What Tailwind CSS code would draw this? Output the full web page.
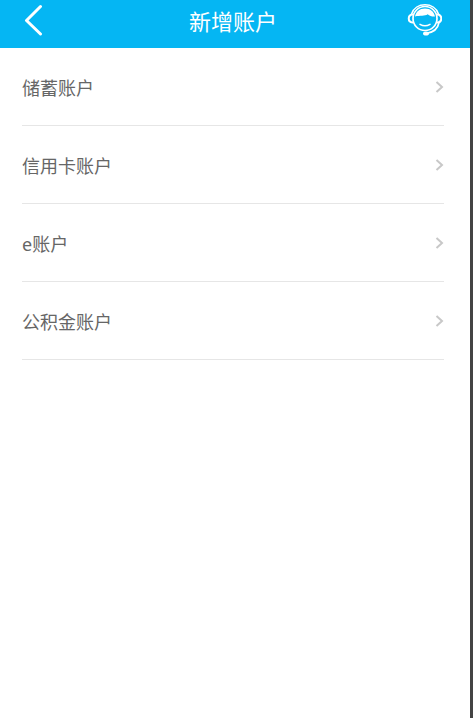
<!DOCTYPE html>
<html lang="zh-CN">
<head>
  <meta charset="UTF-8" />
  <meta name="viewport" content="width=device-width, initial-scale=1.0"/>
  <title>新增账户</title>
  <script src="https://cdn.jsdelivr.net/npm/@tailwindcss/browser@4"></script>
</head>
<body class="min-h-screen bg-white border-r-3 border-[#444444] font-['Noto_Sans','Noto_Sans_CJK_SC',sans-serif]">
  <header class="grid grid-cols-[1fr_auto_1fr] items-center h-12 pl-6 pr-7 bg-[#05b6f3] text-white">
    <button type="button" aria-label="返回" class="justify-self-start">
      <svg class="block w-5 h-8 mb-2" viewBox="0 0 20 32" fill="none" stroke="currentColor" stroke-width="3" stroke-linecap="round" stroke-linejoin="round">
        <path d="M16.5 2.5 2.5 16.5l14 13.5"/>
      </svg>
    </button>
    <h1 class="pb-1.5 text-[22px] leading-8 font-normal">新增账户</h1>
    <button type="button" aria-label="客服" class="justify-self-end">
      <svg class="block w-9 h-8 mb-2" viewBox="0 0 36 32" fill="none" stroke="currentColor" stroke-linecap="round" stroke-linejoin="round">
        <!-- headset band and face -->
        <path d="M5.500 10C7.500 4 13 .8 19 .8S30.500 4 32.500 10" stroke-width="1.500"/>
        <circle cx="19" cy="14.500" r="12" stroke-width="1.700"/>
        <!-- ear cups -->
        <path d="M6.500 10.500c-5 .5-5 7.500 0 8M31.500 10.500c5 .5 5 7.500 0 8" stroke-width="2"/>
        <!-- hair -->
        <path d="M9 12.500C10 7.500 13.500 4.500 19 4.500S28 7.500 29 12.500c-2.500.3-5.500-.6-7.300-2.300-3 2.300-7.500.8-12.700 2.300Z" fill="currentColor" stroke="none"/>
        <path d="M14 20.300c3 1.700 7 1.700 10 0" stroke-width="1.500"/>
        <!-- microphone -->
        <path d="M33 18.500c-1 6-6 10-13 11" stroke-width="1.600"/>
        <ellipse cx="20" cy="29.500" rx="3" ry="2" fill="currentColor" stroke="none"/>
      </svg>
    </button>
  </header>

  <main class="pl-[22px] pr-[26px]">
    <ul class="text-lg text-[#666666]">
      <li class="border-b border-[#e6e6e6]">
        <a href="#" class="flex items-center justify-between h-[77px]">
          <span class="pt-0.5">储蓄账户</span>
          <svg class="w-[9px] h-3" viewBox="0 0 9 12" fill="none" stroke="#c8c8c8" stroke-width="2"><path d="m1.500 1 5.500 5-5.500 5"/></svg>
        </a>
      </li>
      <li class="border-b border-[#e6e6e6]">
        <a href="#" class="flex items-center justify-between h-[77px]">
          <span class="pt-0.5">信用卡账户</span>
          <svg class="w-[9px] h-3" viewBox="0 0 9 12" fill="none" stroke="#c8c8c8" stroke-width="2"><path d="m1.500 1 5.500 5-5.500 5"/></svg>
        </a>
      </li>
      <li class="border-b border-[#e6e6e6]">
        <a href="#" class="flex items-center justify-between h-[77px]">
          <span class="pt-0.5">e账户</span>
          <svg class="w-[9px] h-3" viewBox="0 0 9 12" fill="none" stroke="#c8c8c8" stroke-width="2"><path d="m1.500 1 5.500 5-5.500 5"/></svg>
        </a>
      </li>
      <li class="border-b border-[#e6e6e6]">
        <a href="#" class="flex items-center justify-between h-[77px]">
          <span class="pt-0.5">公积金账户</span>
          <svg class="w-[9px] h-3" viewBox="0 0 9 12" fill="none" stroke="#c8c8c8" stroke-width="2"><path d="m1.500 1 5.500 5-5.500 5"/></svg>
        </a>
      </li>
    </ul>
  </main>
</body>
</html>
